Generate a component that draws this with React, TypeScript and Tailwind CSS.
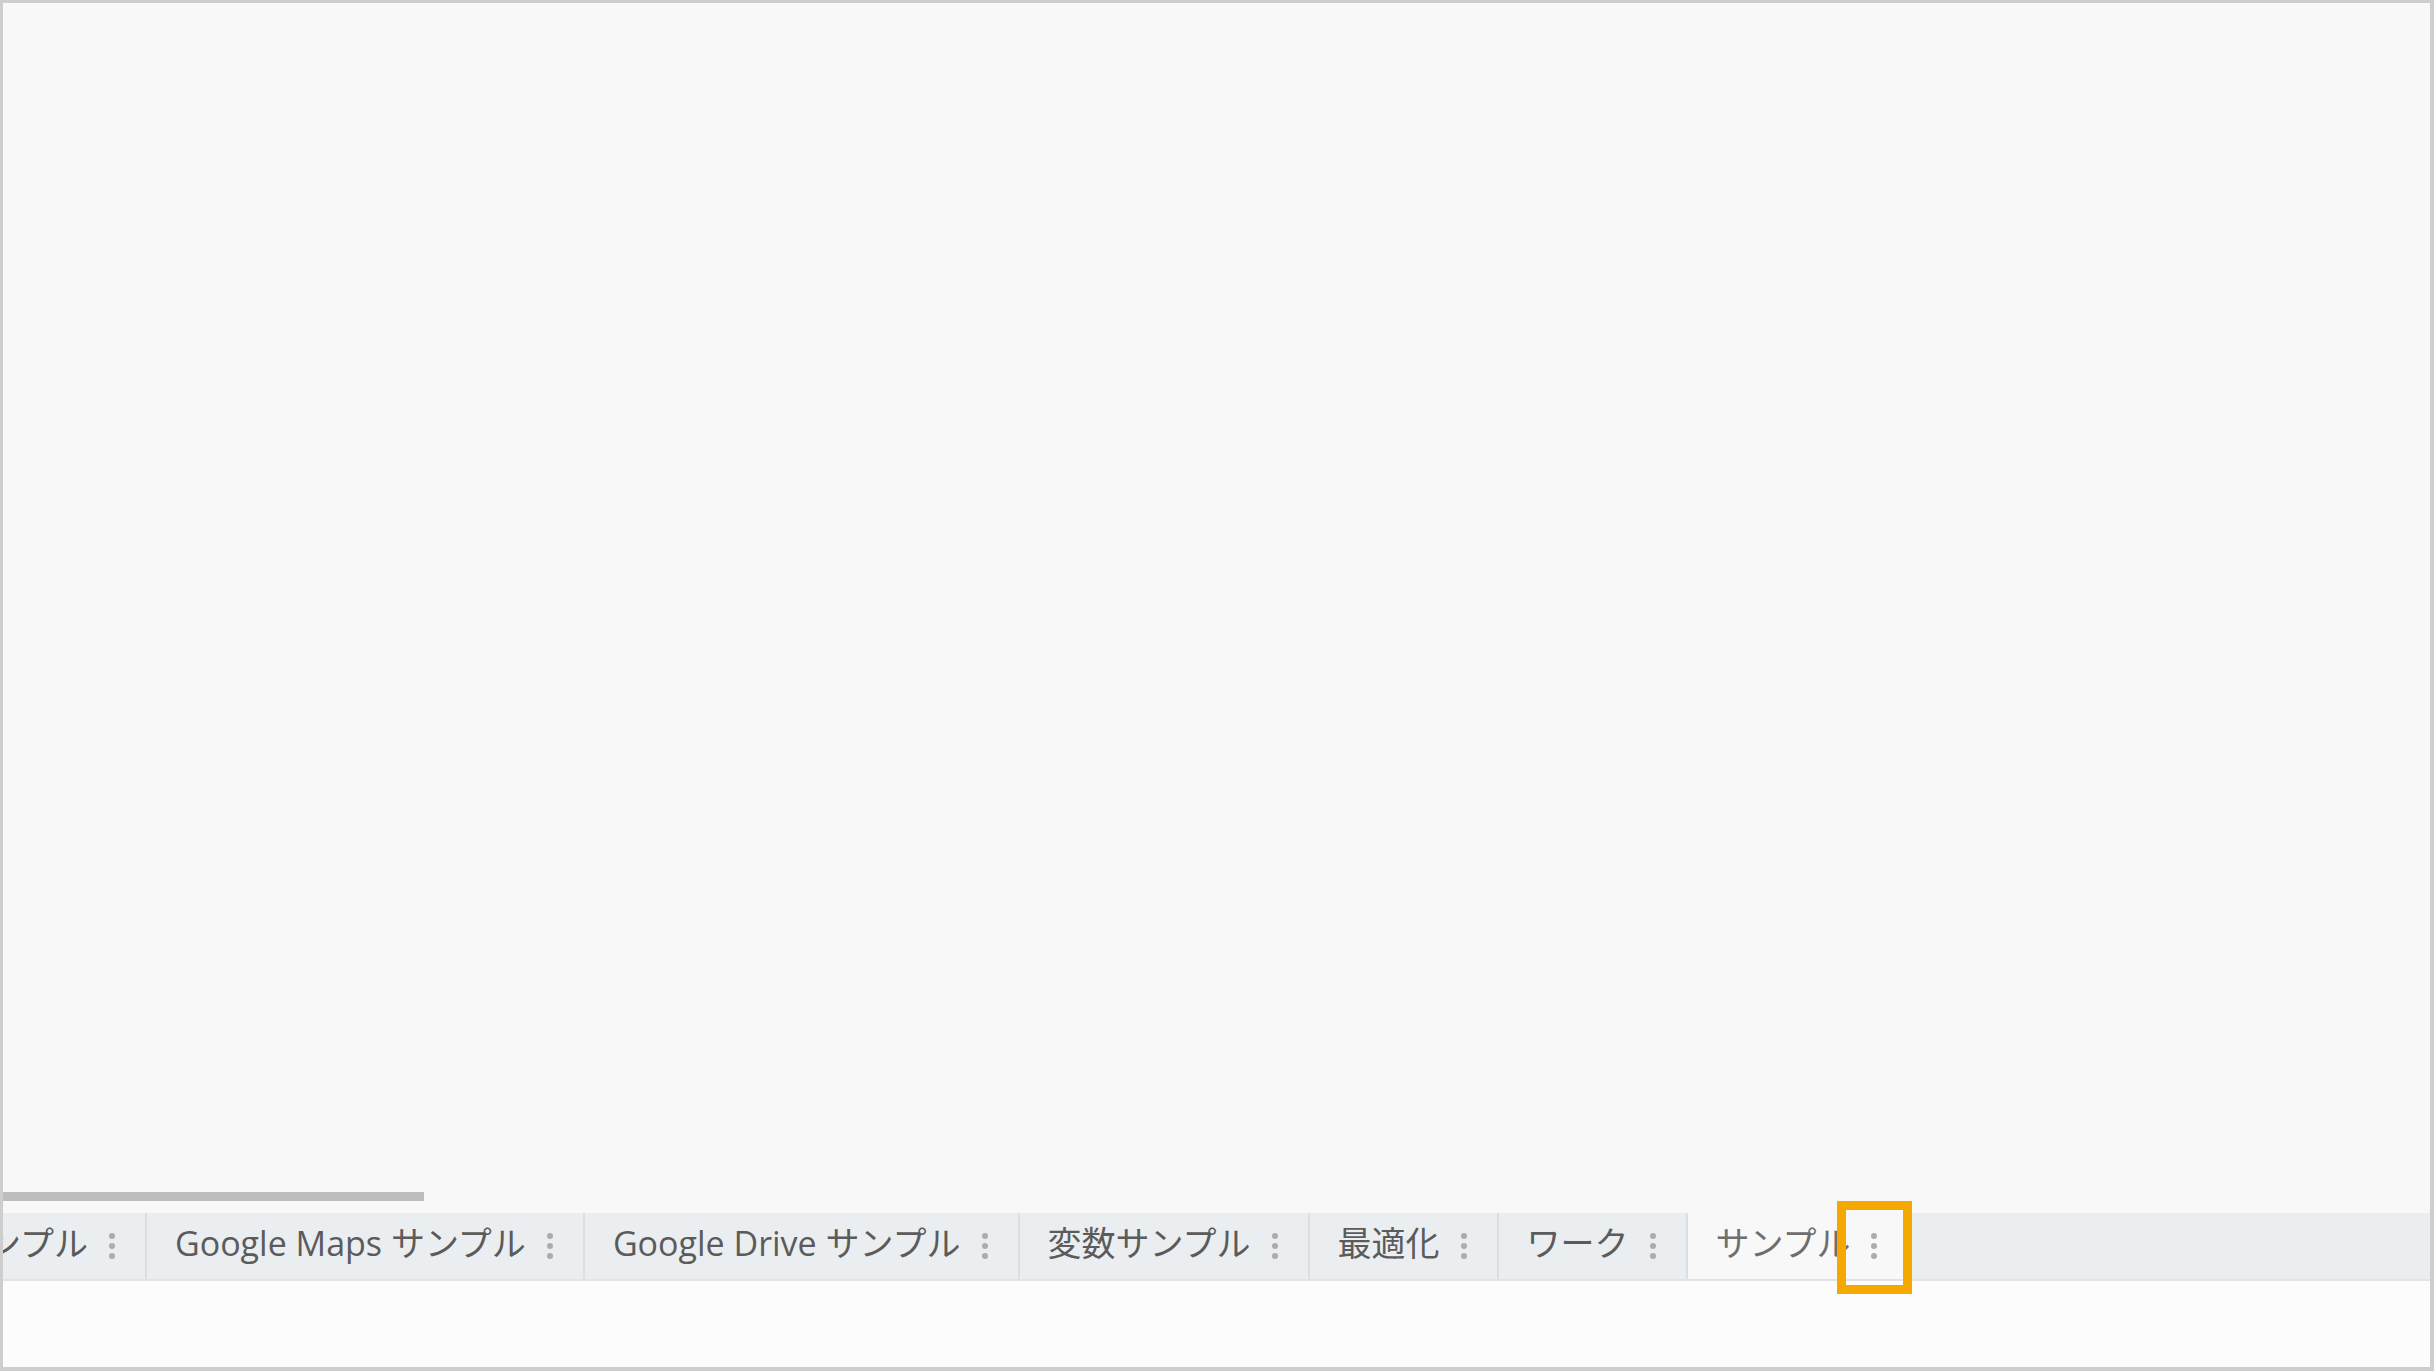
import React from 'react';

const tabs = [
  { label: 'サンプル', first: true },
  { label: 'Google Maps サンプル' },
  { label: 'Google Drive サンプル' },
  { label: '変数サンプル' },
  { label: '最適化' },
  { label: 'ワーク' },
  { label: 'サンプル', active: true },
];

function MoreDots() {
  return (
    <div className="flex flex-col items-center gap-[4px]">
      <span className="block h-[6px] w-[6px] rounded-full bg-[#acacac]" />
      <span className="block h-[6px] w-[6px] rounded-full bg-[#acacac]" />
      <span className="block h-[6px] w-[6px] rounded-full bg-[#acacac]" />
    </div>
  );
}

function SheetTab({ label, first, active }: { label: string; first?: boolean; active?: boolean }) {
  return (
    <div
      className={
        'relative flex h-full shrink-0 items-center gap-[21px] pl-[28px] pr-[30px] ' +
        (active ? 'bg-[#f8f8f8]' : 'border-r-2 border-[#dcdfe2]') +
        (first ? ' ml-[-78px]' : '')
      }
    >
      <span
        className={
          'mb-[7px] whitespace-nowrap text-[34px] leading-none ' +
          (active ? 'text-[#6e6e6e]' : 'text-[#5b5b5b]')
        }
      >
        {label}
      </span>
      <MoreDots />
      {active && (
        // highlight marker drawn over the menu button
        <div className="pointer-events-none absolute right-[-5px] top-[-12px] z-10 h-[93px] w-[75px] border-[9px] border-[#f5a800]" />
      )}
    </div>
  );
}

export default function App() {
  return (
    <div
      className="flex h-[1371px] w-[2434px] flex-col border-t-[3px] border-l-[3px] border-r-4 border-b-4 border-[#cecece] bg-[#f8f8f8]"
      style={{ fontFamily: '"Open Sans", "Noto Sans CJK JP", sans-serif' }}
    >
      <div className="flex-1" />
      {/* tab strip scrollbar */}
      <div className="h-[9px] w-[421px] bg-[#bdbdbd]" />
      <div className="h-[12px]" />
      <div className="flex h-[68px] overflow-x-clip border-b-2 border-[#e3e3e3] bg-[#ebeef1]">
        {tabs.map((t, i) => (
          <SheetTab key={i} label={t.label} first={t.first} active={t.active} />
        ))}
      </div>
      <div className="h-[86px] bg-[#fcfcfc]" />
    </div>
  );
}
